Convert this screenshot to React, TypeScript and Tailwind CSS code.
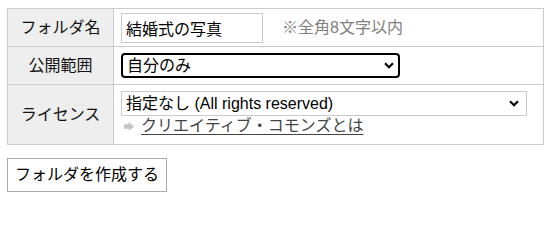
import { useState } from "react";

function Chevron({ className }: { className?: string }) {
  return (
    <svg viewBox="0 0 10 7" className={className} fill="none">
      <path d="M1 1.2 5 5.2 9 1.2" stroke="#000" strokeWidth="2.2" />
    </svg>
  );
}

function LinkArrow() {
  return (
    <svg viewBox="0 0 10 9" className="h-[9px] w-[10px]">
      <path d="M0 2.2h4.8V0L10 4.5 4.8 9V6.8H0z" fill="#c4c4c4" />
    </svg>
  );
}

function Label({ children }: { children: React.ReactNode }) {
  return (
    <div className="flex w-[106px] shrink-0 items-center justify-center border-r border-[#cccccc] bg-[#eeeeee] text-[#111]">
      {children}
    </div>
  );
}

export default function App() {
  const [name, setName] = useState("結婚式の写真");
  const [scope, setScope] = useState("self");
  const [license, setLicense] = useState("none");

  return (
    <div className="pl-[7px] pt-[8px] text-[16px] leading-[20px] font-['Liberation_Sans','Noto_Sans_CJK_JP',sans-serif]">
      <div className="w-[537px] border border-[#cccccc]">
        <div className="flex h-[38px] border-b border-[#cccccc]">
          <Label>フォルダ名</Label>
          <div className="flex flex-1 items-center px-[7px]">
            <input
              value={name}
              onChange={(e) => setName(e.target.value)}
              className="h-[30px] w-[142px] border border-[#cacaca] px-[4px] text-[#000] outline-none"
            />
            <span className="ml-[19px] text-[#808080]">※全角8文字以内</span>
          </div>
        </div>

        <div className="flex h-[38px] border-b border-[#cccccc]">
          <Label>公開範囲</Label>
          <div className="flex flex-1 items-center px-[7px]">
            <div className="relative">
              <select
                value={scope}
                onChange={(e) => setScope(e.target.value)}
                className="h-[25px] w-[279px] appearance-none rounded-[4px] border-2 border-black bg-white pl-[4px] text-[#000] outline-none"
              >
                <option value="self">自分のみ</option>
                <option value="friends">友達まで</option>
                <option value="all">全体に公開</option>
              </select>
              <Chevron className="pointer-events-none absolute right-[6px] top-[9px] h-[7px] w-[10px]" />
            </div>
          </div>
        </div>

        <div className="flex h-[59px]">
          <Label>ライセンス</Label>
          <div className="flex flex-1 flex-col px-[7px] pt-[6px]">
            <div className="relative">
              <select
                value={license}
                onChange={(e) => setLicense(e.target.value)}
                className="h-[25px] w-[406px] appearance-none border border-[#cacaca] bg-white pl-[4px] text-[#000] outline-none"
              >
                <option value="none">指定なし (All rights reserved)</option>
                <option value="by">表示 (CC BY)</option>
              </select>
              <Chevron className="pointer-events-none absolute left-[388px] top-[9px] h-[7px] w-[10px]" />
            </div>
            <div className="flex items-center pl-[3px]">
              <LinkArrow />
              <a href="#" className="ml-[7px] text-[#444] underline underline-offset-[3px]">
                クリエイティブ・コモンズとは
              </a>
            </div>
          </div>
        </div>
      </div>

      <button className="mt-[13px] h-[34px] border border-[#aaaaaa] bg-white px-[7px] text-[#000]">
        フォルダを作成する
      </button>
    </div>
  );
}
